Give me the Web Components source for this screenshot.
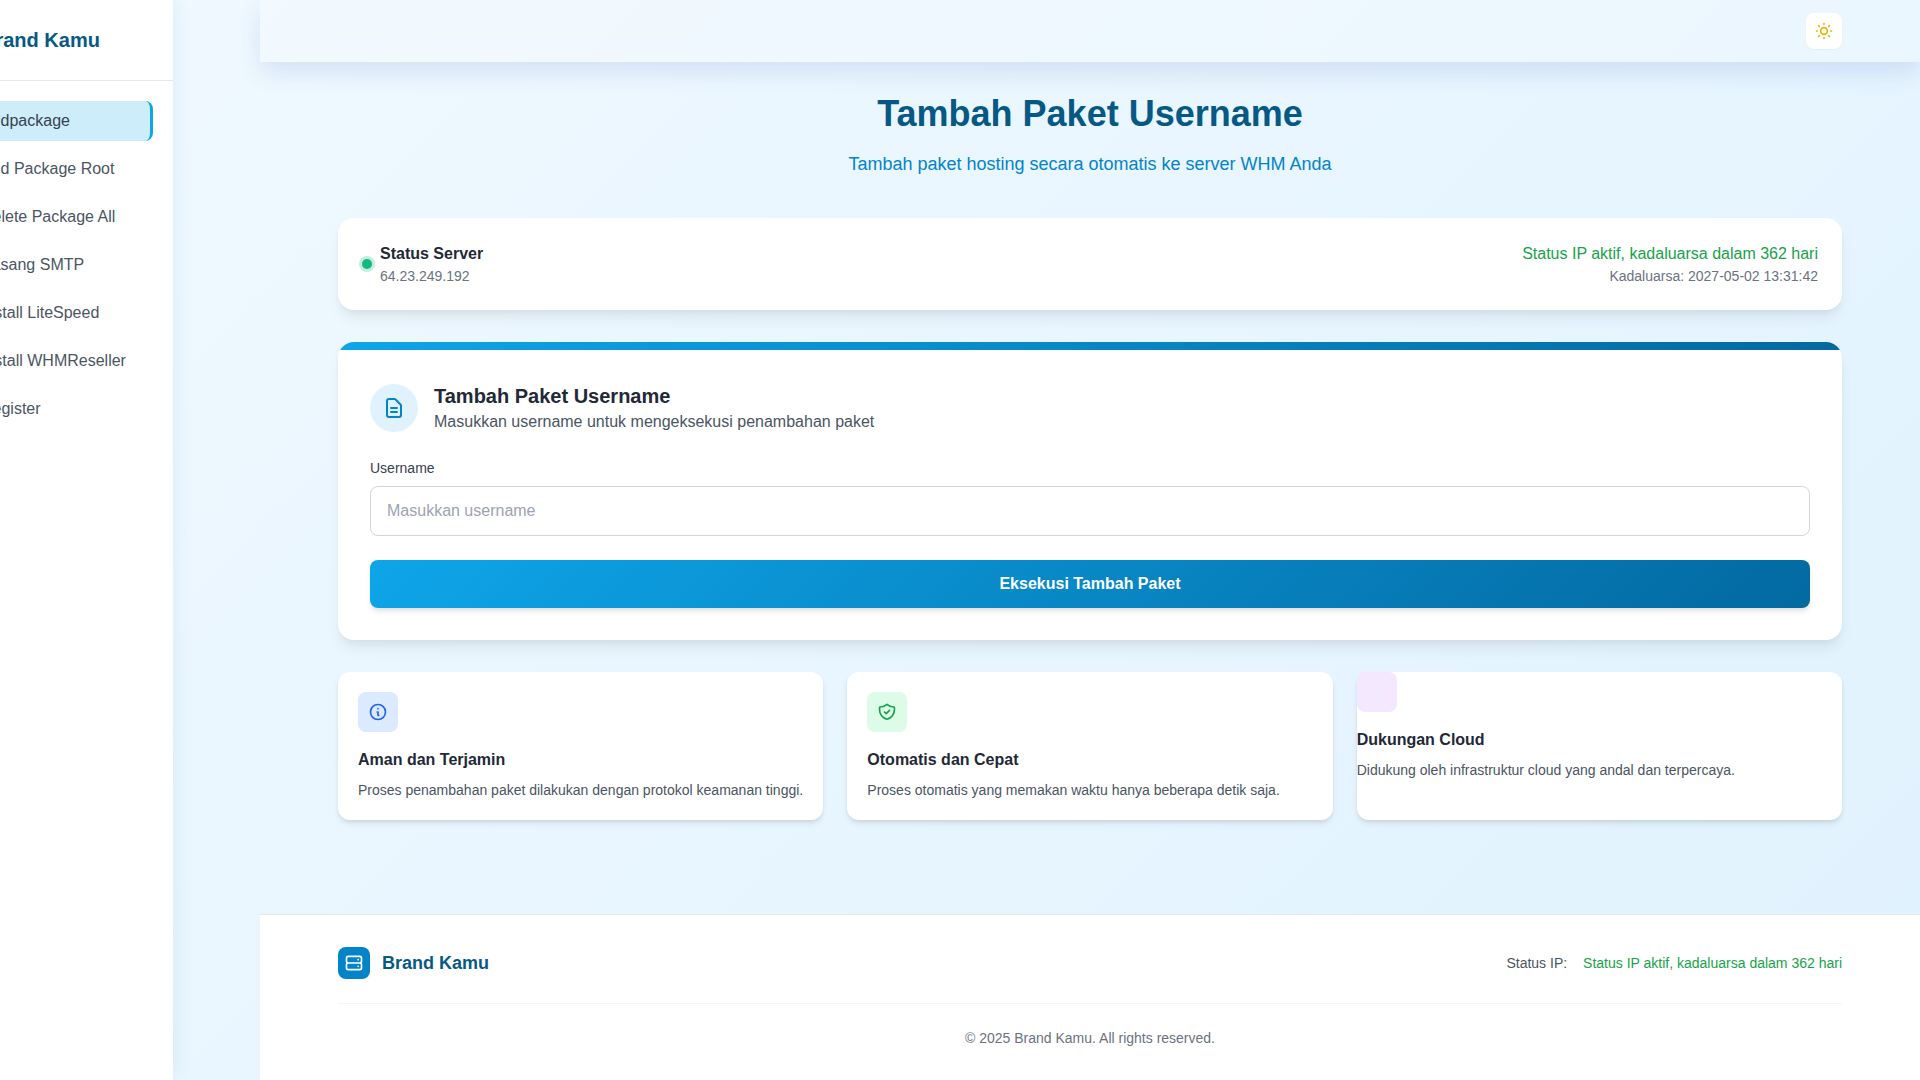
<!DOCTYPE html>
<html lang="id">
<head>
<meta charset="utf-8">
<title>Tambah Paket Username</title>
<style>
html,body{margin:0;padding:0;height:100%}
body{font-family:"Liberation Sans",Arial,sans-serif;font-size:16px;line-height:1.5;color:#1f2937;background:linear-gradient(135deg,#f0f9ff 0%,#e0f2fe 100%);overflow:hidden}
app-shell{min-height:100vh}
svg.i{fill:none;stroke:currentColor;stroke-width:2;stroke-linecap:round;stroke-linejoin:round;display:block}
</style>
</head>
<body>
<app-shell>
  <app-sidebar slot="side" brand="Brand Kamu">
    <nav-item active>Addpackage</nav-item>
    <nav-item>Add Package Root</nav-item>
    <nav-item>Delete Package All</nav-item>
    <nav-item>Pasang SMTP</nav-item>
    <nav-item>Install LiteSpeed</nav-item>
    <nav-item>Install WHMReseller</nav-item>
    <nav-item>Register</nav-item>
  </app-sidebar>
  <top-bar></top-bar>
  <page-content>
    <page-heading title="Tambah Paket Username" subtitle="Tambah paket hosting secara otomatis ke server WHM Anda"></page-heading>
    <status-card name="Status Server" ip="64.23.249.192" status="Status IP aktif, kadaluarsa dalam 362 hari" expiry="Kadaluarsa: 2027-05-02 13:31:42"></status-card>
    <form-card title="Tambah Paket Username" subtitle="Masukkan username untuk mengeksekusi penambahan paket" label="Username" placeholder="Masukkan username" action="Eksekusi Tambah Paket"></form-card>
    <feature-grid>
      <feature-card heading="Aman dan Terjamin" tint="#dbeafe" ink="#2563eb" text="Proses penambahan paket dilakukan dengan protokol keamanan tinggi.">
        <svg class="i" width="20" height="20" viewBox="0 0 24 24" fill="none" stroke="currentColor" stroke-width="2" stroke-linecap="round" stroke-linejoin="round"><path d="M13 16h-1v-4h-1m1-4h.01M21 12a9 9 0 11-18 0 9 9 0 0118 0z"/></svg>
      </feature-card>
      <feature-card heading="Otomatis dan Cepat" tint="#dcfce7" ink="#16a34a" text="Proses otomatis yang memakan waktu hanya beberapa detik saja.">
        <svg class="i" width="20" height="20" viewBox="0 0 24 24" fill="none" stroke="currentColor" stroke-width="2" stroke-linecap="round" stroke-linejoin="round"><path d="M9 12l2 2 4-4m5.618-4.016A11.955 11.955 0 0112 2.944a11.955 11.955 0 01-8.618 3.04A12.02 12.02 0 003 9c0 5.591 3.824 10.29 9 11.622 5.176-1.332 9-6.03 9-11.622 0-1.042-.133-2.052-.382-3.016z"/></svg>
      </feature-card>
      <feature-card flush heading="Dukungan Cloud" tint="#f3e8ff" text="Didukung oleh infrastruktur cloud yang andal dan terpercaya."></feature-card>
    </feature-grid>
  </page-content>
  <site-footer brand="Brand Kamu" status="Status IP aktif, kadaluarsa dalam 362 hari" copy="© 2025 Brand Kamu. All rights reserved."></site-footer>
</app-shell>
<script>
class Base extends HTMLElement{
  constructor(){super();this.attachShadow({mode:'open'});}
  a(n){return this.getAttribute(n)||'';}
  connectedCallback(){this.shadowRoot.innerHTML=this.view();}
}
const svg=(d,s)=>`<svg width="${s}" height="${s}" viewBox="0 0 24 24" fill="none" stroke="currentColor" stroke-width="2" stroke-linecap="round" stroke-linejoin="round" style="display:block"><path d="${d}"/></svg>`;
const SERVER='M5 12h14M5 12a2 2 0 01-2-2V6a2 2 0 012-2h14a2 2 0 012 2v4a2 2 0 01-2 2M5 12a2 2 0 00-2 2v4a2 2 0 002 2h14a2 2 0 002-2v-4a2 2 0 00-2-2m-2-4h.01M17 16h.01';

customElements.define('app-shell',class extends Base{view(){return `<style>
:host{display:flex;height:100vh}
.side{flex:0 0 260px;width:260px;display:block}
.main{flex:1;min-width:0;display:flex;flex-direction:column;height:100vh}
</style><div class="side"><slot name="side"></slot></div><div class="main"><slot></slot></div>`;}});

customElements.define('app-sidebar',class extends Base{view(){return `<style>
:host{display:block;width:260px;height:100vh;background:#fff;transform:translateX(-87px);box-shadow:0 0 20px rgba(14,116,184,.1);position:relative;z-index:2}
.brand{height:80px;border-bottom:1px solid #e5e7eb;display:flex;align-items:center;gap:12px;padding:0 20px;box-sizing:content-box}
.logo{width:36px;height:36px;border-radius:8px;background:#0284c7;color:#fff;display:grid;place-items:center;flex:none}
.name{font-size:20px;font-weight:700;line-height:28px;color:#075985}
nav{padding:20px 20px 0;display:flex;flex-direction:column;gap:8px}
</style><div class="brand"><span class="logo">${svg(SERVER,20)}</span><span class="name">${this.a('brand')}</span></div><nav><slot></slot></nav>`;}});

customElements.define('nav-item',class extends Base{view(){return `<style>
:host{display:flex;align-items:center;height:40px;box-sizing:border-box;padding-left:48px;border-radius:8px;font-size:16px;color:#4b5563}
:host([active]){background:#cdedfb;color:#374151;border-right:3px solid #0ea5e9}
</style><slot></slot>`;}});

customElements.define('top-bar',class extends Base{view(){return `<style>
:host{display:flex;flex:none;height:62px;align-items:center;justify-content:flex-end;padding:0 78px;background:rgba(255,255,255,.22);box-shadow:0 10px 25px rgba(30,64,175,.12);position:relative;z-index:1}
button{width:36px;height:36px;padding:0;border:0;border-radius:8px;background:#fff;color:#eab308;display:grid;place-items:center;box-shadow:0 1px 2px rgba(0,0,0,.04)}
</style><button aria-label="Tema">${svg('M12 3v1m0 16v1m9-9h-1M4 12H3m15.364 6.364l-.707-.707M6.343 6.343l-.707-.707m12.728 0l-.707.707M6.343 17.657l-.707.707M16 12a4 4 0 11-8 0 4 4 0 018 0z',20)}</button>`;}});

customElements.define('page-content',class extends Base{view(){return `<style>
:host{display:flex;flex-direction:column;flex:1;padding:32px 78px 0;min-height:0}
</style><slot></slot>`;}});

customElements.define('page-heading',class extends Base{view(){return `<style>
:host{display:block;text-align:center;margin-bottom:40px}
h1{margin:0 0 16px;font-size:36px;line-height:40px;font-weight:700;color:#075985}
p{margin:0;font-size:18px;line-height:28px;color:#0284c7}
</style><h1>${this.a('title')}</h1><p>${this.a('subtitle')}</p>`;}});

customElements.define('status-card',class extends Base{view(){return `<style>
:host{display:flex;justify-content:space-between;align-items:center;background:#fff;border-radius:16px;padding:24px;margin-bottom:32px;box-shadow:0 10px 15px -3px rgba(0,0,0,.08),0 4px 6px -2px rgba(0,0,0,.04)}
.l{display:flex;align-items:center;gap:8px}
.dot{width:10px;height:10px;border-radius:50%;background:#10b981;box-shadow:0 0 0 3px rgba(16,185,129,.25);flex:none}
b{display:block;font-size:16px;line-height:24px;color:#1f2937}
small{display:block;font-size:14px;line-height:20px;color:#6b7280}
.r{text-align:right}
.g{display:block;font-size:16px;line-height:24px;color:#16a34a}
</style><div class="l"><span class="dot"></span><div><b>${this.a('name')}</b><small>${this.a('ip')}</small></div></div><div class="r"><span class="g">${this.a('status')}</span><small>${this.a('expiry')}</small></div>`;}});

customElements.define('form-card',class extends Base{view(){return `<style>
:host{display:block;background:#fff;border-radius:16px;overflow:hidden;margin-bottom:32px;box-shadow:0 10px 15px -3px rgba(0,0,0,.08),0 4px 6px -2px rgba(0,0,0,.04)}
.bar{height:8px;background:linear-gradient(90deg,#0ea5e9,#0369a1)}
.body{padding:32px}
.head{display:flex;align-items:center;gap:16px;margin-bottom:24px}
.ic{width:48px;height:48px;border-radius:50%;background:#e0f2fe;color:#0284c7;display:grid;place-items:center;flex:none}
h2{margin:0;font-size:20px;line-height:28px;font-weight:700;color:#1f2937}
p{margin:0;font-size:16px;line-height:24px;color:#4b5563}
label{display:block;font-size:14px;line-height:20px;color:#374151;margin-bottom:8px}
input{display:block;width:100%;height:50px;box-sizing:border-box;border:1px solid #d1d5db;border-radius:8px;padding:0 16px;font:inherit;font-size:16px;background:#fff;color:#1f2937;margin-bottom:24px;outline:0}
input::placeholder{color:#9ca3af;opacity:1}
button{display:block;width:100%;height:48px;border:0;border-radius:8px;background:linear-gradient(135deg,#0ea5e9,#0369a1);color:#fff;font:inherit;font-size:16px;font-weight:700;box-shadow:0 4px 6px -1px rgba(0,0,0,.1),0 2px 4px -1px rgba(0,0,0,.06)}
</style><div class="bar"></div><div class="body"><div class="head"><span class="ic">${svg('M9 12h6m-6 4h6m2 5H7a2 2 0 01-2-2V5a2 2 0 012-2h5.586a1 1 0 01.707.293l5.414 5.414a1 1 0 01.293.707V19a2 2 0 01-2 2z',24)}</span><div><h2>${this.a('title')}</h2><p>${this.a('subtitle')}</p></div></div><label for="u">${this.a('label')}</label><input id="u" placeholder="${this.a('placeholder')}"><button>${this.a('action')}</button></div>`;}});

customElements.define('feature-grid',class extends Base{view(){return `<style>
:host{display:grid;grid-template-columns:repeat(3,1fr);gap:24px}
</style><slot></slot>`;}});

customElements.define('feature-card',class extends Base{view(){return `<style>
:host{display:block;background:#fff;border-radius:12px;padding:20px;min-height:108px;box-shadow:0 4px 6px -1px rgba(0,0,0,.1),0 2px 4px -1px rgba(0,0,0,.06)}
:host([flush]){padding:0}
.ic{width:40px;height:40px;border-radius:8px;background:${this.a('tint')};color:${this.a('ink')};display:grid;place-items:center;margin-bottom:16px}
h3{margin:0 0 8px;font-size:16px;line-height:24px;font-weight:700;color:#1f2937}
p{margin:0;font-size:14px;line-height:20px;color:#4b5563}
</style><div class="ic"><slot></slot></div><h3>${this.a('heading')}</h3><p>${this.a('text')}</p>`;}});

customElements.define('site-footer',class extends Base{view(){return `<style>
:host{display:block;flex:none;background:#fff;border-top:1px solid #e5e7eb;padding:32px 78px}
.row{display:flex;justify-content:space-between;align-items:center;padding-bottom:24px;border-bottom:1px solid #f3f4f6}
.b{display:flex;align-items:center;gap:12px;font-size:18px;line-height:28px;font-weight:700;color:#075985}
.logo{width:32px;height:32px;border-radius:8px;background:#0284c7;color:#fff;display:grid;place-items:center}
.s{display:flex;gap:16px;font-size:14px;line-height:20px;color:#4b5563}
.s span+span{color:#16a34a}
.c{margin:24px 0 0;text-align:center;font-size:14px;line-height:20px;color:#6b7280}
</style><div class="row"><div class="b"><span class="logo">${svg(SERVER,20)}</span>${this.a('brand')}</div><div class="s"><span>Status IP:</span><span>${this.a('status')}</span></div></div><p class="c">${this.a('copy')}</p>`;}});
</script>
</body>
</html>
